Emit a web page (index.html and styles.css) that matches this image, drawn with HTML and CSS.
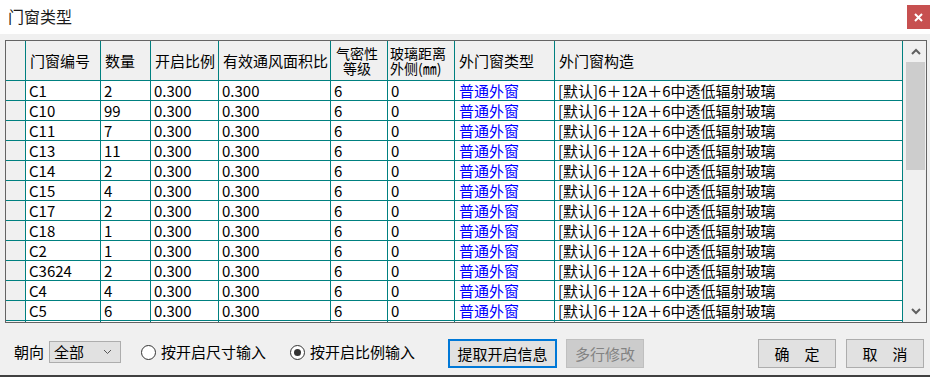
FILE: index.html
```html
<!DOCTYPE html>
<html lang="zh-CN">
<head>
    <meta charset="UTF-8">
    <title>门窗类型</title>
    <link rel="stylesheet" href="styles.css">
</head>
<body>
<div class="window">
    <div class="title-bar">
        <span class="title">门窗类型</span>
        <span class="close-btn">
            <svg width="9" height="9" viewBox="0 0 9 9"><path d="M1 1 L8 8 M8 1 L1 8" stroke="#fff" stroke-width="2"/></svg>
        </span>
    </div>

    <div class="content">
        <div class="grid-frame">
            <div class="grid">
                <div class="hcell"></div>
                <div class="hcell">门窗编号</div>
                <div class="hcell">数量</div>
                <div class="hcell">开启比例</div>
                <div class="hcell">有效通风面积比</div>
                <div class="hcell two center"><span>气密性</span><span>等级</span></div>
                <div class="hcell two"><span>玻璃距离</span><span>外侧(㎜)</span></div>
                <div class="hcell">外门窗类型</div>
                <div class="hcell">外门窗构造</div>

                <div class="rh"></div><div class="cell">C1</div><div class="cell">2</div><div class="cell">0.300</div><div class="cell">0.300</div><div class="cell">6</div><div class="cell">0</div><div class="cell link">普通外窗</div><div class="cell">[默认]6＋12A＋6中透低辐射玻璃</div>
                <div class="rh"></div><div class="cell">C10</div><div class="cell">99</div><div class="cell">0.300</div><div class="cell">0.300</div><div class="cell">6</div><div class="cell">0</div><div class="cell link">普通外窗</div><div class="cell">[默认]6＋12A＋6中透低辐射玻璃</div>
                <div class="rh"></div><div class="cell">C11</div><div class="cell">7</div><div class="cell">0.300</div><div class="cell">0.300</div><div class="cell">6</div><div class="cell">0</div><div class="cell link">普通外窗</div><div class="cell">[默认]6＋12A＋6中透低辐射玻璃</div>
                <div class="rh"></div><div class="cell">C13</div><div class="cell">11</div><div class="cell">0.300</div><div class="cell">0.300</div><div class="cell">6</div><div class="cell">0</div><div class="cell link">普通外窗</div><div class="cell">[默认]6＋12A＋6中透低辐射玻璃</div>
                <div class="rh"></div><div class="cell">C14</div><div class="cell">2</div><div class="cell">0.300</div><div class="cell">0.300</div><div class="cell">6</div><div class="cell">0</div><div class="cell link">普通外窗</div><div class="cell">[默认]6＋12A＋6中透低辐射玻璃</div>
                <div class="rh"></div><div class="cell">C15</div><div class="cell">4</div><div class="cell">0.300</div><div class="cell">0.300</div><div class="cell">6</div><div class="cell">0</div><div class="cell link">普通外窗</div><div class="cell">[默认]6＋12A＋6中透低辐射玻璃</div>
                <div class="rh"></div><div class="cell">C17</div><div class="cell">2</div><div class="cell">0.300</div><div class="cell">0.300</div><div class="cell">6</div><div class="cell">0</div><div class="cell link">普通外窗</div><div class="cell">[默认]6＋12A＋6中透低辐射玻璃</div>
                <div class="rh"></div><div class="cell">C18</div><div class="cell">1</div><div class="cell">0.300</div><div class="cell">0.300</div><div class="cell">6</div><div class="cell">0</div><div class="cell link">普通外窗</div><div class="cell">[默认]6＋12A＋6中透低辐射玻璃</div>
                <div class="rh"></div><div class="cell">C2</div><div class="cell">1</div><div class="cell">0.300</div><div class="cell">0.300</div><div class="cell">6</div><div class="cell">0</div><div class="cell link">普通外窗</div><div class="cell">[默认]6＋12A＋6中透低辐射玻璃</div>
                <div class="rh"></div><div class="cell">C3624</div><div class="cell">2</div><div class="cell">0.300</div><div class="cell">0.300</div><div class="cell">6</div><div class="cell">0</div><div class="cell link">普通外窗</div><div class="cell">[默认]6＋12A＋6中透低辐射玻璃</div>
                <div class="rh"></div><div class="cell">C4</div><div class="cell">4</div><div class="cell">0.300</div><div class="cell">0.300</div><div class="cell">6</div><div class="cell">0</div><div class="cell link">普通外窗</div><div class="cell">[默认]6＋12A＋6中透低辐射玻璃</div>
                <div class="rh"></div><div class="cell">C5</div><div class="cell">6</div><div class="cell">0.300</div><div class="cell">0.300</div><div class="cell">6</div><div class="cell">0</div><div class="cell link">普通外窗</div><div class="cell">[默认]6＋12A＋6中透低辐射玻璃</div>
                <div class="rh"></div><div class="cell"></div><div class="cell"></div><div class="cell"></div><div class="cell"></div><div class="cell"></div><div class="cell"></div><div class="cell"></div><div class="cell"></div>
            </div>
            <div class="scrollbar">
                <div class="sb-arrow">
                    <svg width="10" height="7" viewBox="0 0 10 7"><path d="M1 6 L5 2 L9 6" fill="none" stroke="#606060" stroke-width="2"/></svg>
                </div>
                <div class="sb-track"><div class="sb-thumb"></div></div>
                <div class="sb-arrow">
                    <svg width="10" height="7" viewBox="0 0 10 7"><path d="M1 1 L5 5 L9 1" fill="none" stroke="#606060" stroke-width="2"/></svg>
                </div>
            </div>
        </div>

        <div class="bottom-bar">
            <span class="label">朝向</span>
            <div class="select">
                <span>全部</span>
                <svg width="9" height="6" viewBox="0 0 9 6"><path d="M1 1 L4.5 4.5 L8 1" fill="none" stroke="#555" stroke-width="1"/></svg>
            </div>
            <span class="radio first"></span>
            <span class="radio-label">按开启尺寸输入</span>
            <span class="radio checked"></span>
            <span class="radio-label">按开启比例输入</span>
            <button class="btn btn-focus">提取开启信息</button>
            <button class="btn btn-disabled">多行修改</button>
            <button class="btn btn-ok">确　定</button>
            <button class="btn">取　消</button>
        </div>
    </div>
</div>
</body>
</html>
```

FILE: styles.css
```css
* { margin: 0; padding: 0; box-sizing: border-box; }
body {
    font-family: 'Noto Sans CJK SC', sans-serif;
    font-size: 15px;
    color: #000;
    background-color: #f0f0f0;
    width: 930px;
    height: 377px;
    overflow: hidden;
}
.window { height: 377px; border-bottom: 2px solid #404040; display: flex; flex-direction: column; }

/* 标题栏 */
.title-bar {
    height: 34px;
    background: #fff;
    display: flex;
    align-items: flex-start;
    justify-content: space-between;
}
.title { font-size: 16px; line-height: 20px; margin: 6px 0 0 8px; color: #1a1a1a; }
.close-btn {
    width: 23px;
    height: 24px;
    margin-top: 5px;
    background: #c75050;
    display: flex;
    align-items: center;
    justify-content: center;
}

.content { padding: 6px 4px 0 5px; }

/* 表格 */
.grid-frame {
    width: 922px;
    height: 283px;
    border: 1px solid #646464;
    display: flex;
    overflow: hidden;
}
.grid {
    width: 897px;
    display: grid;
    grid-template-columns: 20px 75px 50px 68px 112px 57px 67px 100px 348px;
    grid-template-rows: 40px;
    grid-auto-rows: 20px;
    align-content: start;
    overflow: hidden;
}
.grid > div {
    border-right: 1px solid #008080;
    border-bottom: 1px solid #008080;
    white-space: nowrap;
    overflow: hidden;
}
.hcell {
    background: #f0f0f0;
    padding-left: 4px;
    line-height: 39px;
}
.hcell.two {
    font-size: 14px;
    line-height: 15px;
    padding-top: 5px;
    padding-left: 2px;
    display: flex;
    flex-direction: column;
}
.hcell.center { align-items: center; padding-left: 0; padding-right: 4px; }
.rh { background: #f0f0f0; }
.cell { background: #fff; padding-left: 3px; line-height: 19px; }
.cell.link { color: #0000ff; padding-left: 4px; }

.scrollbar {
    width: 23px;
    background: #f0f0f0;
    display: flex;
    flex-direction: column;
    padding-left: 3px;
}
.sb-arrow { height: 21px; display: flex; align-items: center; justify-content: center; }
.sb-track { flex: 1; }
.sb-thumb { height: 108px; background: #cdcdcd; margin-right: 1px; }

/* 底部操作栏 */
.bottom-bar {
    height: 29px;
    margin-top: 16px;
    padding-left: 9px;
    display: flex;
    align-items: center;
}
.label { line-height: 20px; margin-top: -3px; }
.select {
    width: 72px;
    height: 22px;
    margin-left: 5px;
    margin-top: -3px;
    border: 1px solid #adadad;
    background: #e1e1e1;
    display: flex;
    align-items: center;
    justify-content: space-between;
    padding: 0 8px 0 4px;
    line-height: 20px;
}
.radio {
    width: 15px;
    height: 15px;
    border: 1px solid #333;
    border-radius: 50%;
    background: #fff;
    margin-left: 24px;
    margin-top: -3px;
    display: flex;
    align-items: center;
    justify-content: center;
}
.radio.first { margin-left: 20px; }
.radio.checked::after { content: ''; width: 7px; height: 7px; border-radius: 50%; background: #333; }
.radio-label { margin-left: 5px; line-height: 20px; margin-top: -3px; }

.btn {
    font-family: 'Noto Sans CJK SC', sans-serif;
    font-size: 15px;
    height: 29px;
    width: 78px;
    border: 1px solid #adadad;
    background: #e1e1e1;
    color: #000;
    margin-left: 10px;
    line-height: 25px;
}
.btn-focus { width: 109px; border: 2px solid #0078d7; margin-left: 33px; }
.btn-disabled { margin-left: 9px; background: #cccccc; border-color: #bfbfbf; color: #838383; }
.btn-ok { margin-left: 114px; }
```
